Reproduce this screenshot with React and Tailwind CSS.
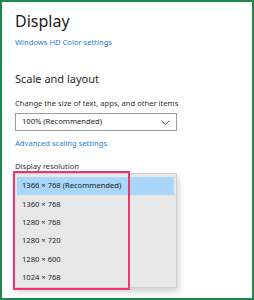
import React from "react";

const resolutions = [
  "1366 × 768 (Recommended)",
  "1360 × 768",
  "1280 × 768",
  "1280 × 720",
  "1280 × 600",
  "1024 × 768",
];

const Chevron = () => (
  <svg width="9" height="5" viewBox="0 0 9 5" fill="none">
    <path d="M0.5 0.5 L4.5 4.5 L8.5 0.5" stroke="#555" strokeWidth="1" />
  </svg>
);

export default function App() {
  return (
    <div
      className="w-[254px] h-[300px] border-2 border-[#1b8a4a] bg-white overflow-hidden text-[#1f1f1f]"
      style={{ fontFamily: '"Noto Sans", "Open Sans", sans-serif' }}
    >
      <div className="pl-[13px] pt-[8px]">
        <h1 className="text-[16px] leading-[22px] text-[#1a1a1a]">Display</h1>
        <a className="block mt-[4px] text-[7.6px] leading-[12px] text-[#1a7fd4]">Windows HD Color settings</a>

        <h2 className="mt-[24px] text-[11px] leading-[14px]">Scale and layout</h2>
        <p className="mt-[11px] text-[7.6px] leading-[12px] text-[#333]">
          Change the size of text, apps, and other items
        </p>

        <div className="mt-[4px] w-[162px] h-[18px] border border-[#9a9a9a] flex items-center justify-between pl-[6px] pr-[6px]">
          <span className="text-[7.6px] text-[#222]">100% (Recommended)</span>
          <Chevron />
        </div>

        <a className="block mt-[6px] text-[7.6px] leading-[12px] text-[#1a7fd4]">Advanced scaling settings</a>

        <p className="mt-[11px] text-[7.6px] leading-[12px] text-[#333]">Display resolution</p>

        <div className="relative mt-[1px] -ml-[1px]">
          <div className="w-[163px] bg-[#e8e8e8] border border-[#cfcfcf] shadow-[2px_4px_6px_rgba(0,0,0,0.18)] pt-[3px] px-[2px]">
            {resolutions.map((r, i) => (
              <div
                key={r}
                className={
                  "h-[18.3px] flex items-center pl-[5px] text-[7.6px] text-[#222] " +
                  (i === 0 ? "bg-[#a9d7fb]" : "")
                }
              >
                {r}
              </div>
            ))}
          </div>
          <div className="absolute left-[-1px] top-[-2px] w-[117px] h-[119px] border-2 border-[#f0346c]" />
        </div>
      </div>
    </div>
  );
}
